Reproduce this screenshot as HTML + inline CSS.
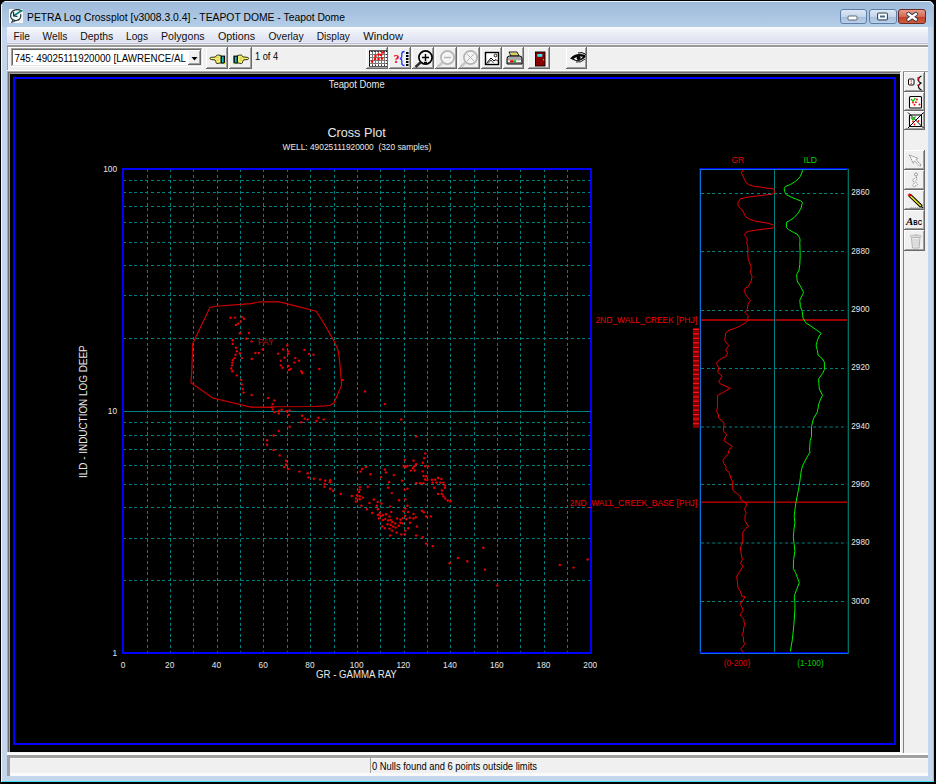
<!DOCTYPE html>
<html><head><meta charset="utf-8"><style>
html,body{margin:0;padding:0;background:#000;overflow:hidden}
svg{display:block}
text{font-family:"Liberation Sans", sans-serif}
</style></head><body>
<svg width="936" height="784" viewBox="0 0 936 784" font-family='"Liberation Sans", sans-serif'>
<rect x="0" y="0" width="936" height="784" fill="#000" />
<rect x="1" y="1" width="933" height="781" fill="#c3d6ec" />
<defs><linearGradient id="tg" x1="0" y1="0" x2="0" y2="1"><stop offset="0" stop-color="#9fbbdb"/><stop offset="1" stop-color="#b4cde8"/></linearGradient><linearGradient id="mg" x1="0" y1="0" x2="0" y2="1"><stop offset="0" stop-color="#fbfcfd"/><stop offset="0.35" stop-color="#eceff7"/><stop offset="1" stop-color="#dde1f0"/></linearGradient><linearGradient id="cg" x1="0" y1="0" x2="0" y2="1"><stop offset="0" stop-color="#e8a090"/><stop offset="0.5" stop-color="#d46a55"/><stop offset="0.55" stop-color="#c0412a"/><stop offset="1" stop-color="#d06040"/></linearGradient><linearGradient id="bg" x1="0" y1="0" x2="0" y2="1"><stop offset="0" stop-color="#dfe9f5"/><stop offset="0.5" stop-color="#c5d6ea"/><stop offset="0.55" stop-color="#a9c0dc"/><stop offset="1" stop-color="#bcd0e8"/></linearGradient></defs>
<rect x="2" y="2" width="931" height="25" fill="url(#tg)" />
<rect x="1" y="1" width="933" height="1" fill="#e8f0f8" />
<rect x="933" y="1" width="1" height="781" fill="#40e0f0" />
<rect x="1" y="781" width="933" height="1" fill="#40e0f0" />
<rect x="1" y="1" width="1" height="781" fill="#f0f6fc" />
<rect x="9" y="9" width="14" height="14" fill="#f4f6f8" />
<g fill="none" stroke-linecap="round"><path d="M21.5 11 C18 8.5 12 9.5 10.8 14 C9.8 18 12.5 21 16.5 20.5 C19.5 20 21 17.5 20.8 14.5" stroke="#1c3434" stroke-width="1.2"/><path d="M13 20 L11.5 22.5 L15 21" stroke="#1c3434" stroke-width="1"/><path d="M22 10.5 L14 15.5" stroke="#108080" stroke-width="1.6"/><path d="M13.5 12.5 L13.8 16 L17 16.3" stroke="#0c3a3a" stroke-width="1.3"/></g>
<text x="27.0" y="20.6" font-size="10.8" fill="#000" text-anchor="start" textLength="318.0" lengthAdjust="spacingAndGlyphs" >PETRA Log Crossplot [v3008.3.0.4] - TEAPOT DOME - Teapot Dome</text>
<rect x="840.5" y="9.5" width="26" height="14" rx="2.5" fill="url(#bg)" stroke="#5c7ea8" stroke-width="1"/>
<rect x="869.5" y="9.5" width="27" height="14" rx="2.5" fill="url(#bg)" stroke="#5c7ea8" stroke-width="1"/>
<rect x="898.5" y="9.5" width="27" height="14" rx="2.5" fill="url(#cg)" stroke="#6a2a20" stroke-width="1"/>
<rect x="848" y="16" width="9" height="4" rx="1" fill="#fff" stroke="#3a4a5a" stroke-width="0.8"/>
<rect x="877.5" y="13" width="10" height="7" rx="1" fill="none" stroke="#3a4a5a" stroke-width="1"/><rect x="879" y="14.5" width="7" height="4" fill="#fff" stroke="#fff" stroke-width="1"/><rect x="880" y="15.5" width="5" height="2" fill="#4a6a8a"/>
<path d="M908.4 13.9 L915.9 19.5 M915.9 13.9 L908.4 19.5" stroke="#2e3440" stroke-width="4.2" stroke-linecap="round"/><path d="M908.4 13.9 L915.9 19.5 M915.9 13.9 L908.4 19.5" stroke="#fff" stroke-width="2.5" stroke-linecap="round"/>
<path d="M1 1 H5 Q2 2 1 5 Z" fill="#000"/><path d="M934 1 H930 Q933 2 934 5 Z" fill="#000"/><path d="M929.5 1.6 Q932.8 2.4 933.4 6" fill="none" stroke="#e8f4fc" stroke-width="0.8"/>
<rect x="7" y="27" width="921" height="16" fill="url(#mg)" />
<rect x="7" y="42" width="921" height="1" fill="#e8ebf8" />
<rect x="7" y="43" width="921" height="1" fill="#b8bcd0" />
<text x="13.5" y="39.6" font-size="11.8" fill="#101010" text-anchor="start" textLength="16.3" lengthAdjust="spacingAndGlyphs" >File</text>
<text x="42.6" y="39.6" font-size="11.8" fill="#101010" text-anchor="start" textLength="24.7" lengthAdjust="spacingAndGlyphs" >Wells</text>
<text x="80.3" y="39.6" font-size="11.8" fill="#101010" text-anchor="start" textLength="33.0" lengthAdjust="spacingAndGlyphs" >Depths</text>
<text x="126.0" y="39.6" font-size="11.8" fill="#101010" text-anchor="start" textLength="22.0" lengthAdjust="spacingAndGlyphs" >Logs</text>
<text x="161.0" y="39.6" font-size="11.8" fill="#101010" text-anchor="start" textLength="43.6" lengthAdjust="spacingAndGlyphs" >Polygons</text>
<text x="218.0" y="39.6" font-size="11.8" fill="#101010" text-anchor="start" textLength="37.0" lengthAdjust="spacingAndGlyphs" >Options</text>
<text x="268.4" y="39.6" font-size="11.8" fill="#101010" text-anchor="start" textLength="35.3" lengthAdjust="spacingAndGlyphs" >Overlay</text>
<text x="316.7" y="39.6" font-size="11.8" fill="#101010" text-anchor="start" textLength="33.2" lengthAdjust="spacingAndGlyphs" >Display</text>
<text x="363.3" y="39.6" font-size="11.8" fill="#101010" text-anchor="start" textLength="39.7" lengthAdjust="spacingAndGlyphs" >Window</text>
<rect x="7" y="44" width="921" height="710" fill="#f0f0f0" />
<rect x="7" y="45" width="921" height="2" fill="#999999" />
<rect x="7" y="47" width="921" height="1" fill="#ffffff" />
<rect x="7" y="47" width="1" height="23" fill="#a0a0a0" />
<rect x="7" y="70" width="921" height="1" fill="#ffffff" />
<rect x="11" y="48" width="192" height="19" fill="#fff" />
<rect x="11" y="48" width="191" height="1" fill="#a0a0a0" />
<rect x="11" y="48" width="1" height="18" fill="#a0a0a0" />
<rect x="12" y="49" width="189" height="1" fill="#696969" />
<rect x="12" y="49" width="1" height="16" fill="#696969" />
<rect x="11" y="66" width="192" height="1" fill="#fff" />
<rect x="202" y="48" width="1" height="19" fill="#fff" />
<rect x="12" y="65" width="190" height="1" fill="#e3e3e3" />
<rect x="201" y="49" width="1" height="17" fill="#e3e3e3" />
<svg x="13" y="50" width="173" height="15">
<text x="1.5" y="11.7" font-size="11" fill="#000" text-anchor="start" textLength="176.8" lengthAdjust="spacingAndGlyphs" >745: 49025111920000 [LAWRENCE/ALL</text>
</svg>
<rect x="188" y="50" width="13" height="15" fill="#f0f0f0" />
<rect x="188" y="50" width="13" height="1" fill="#fff" />
<rect x="188" y="50" width="1" height="15" fill="#fff" />
<rect x="188" y="64" width="13" height="1" fill="#696969" />
<rect x="200" y="50" width="1" height="15" fill="#696969" />
<rect x="189" y="63" width="11" height="1" fill="#a0a0a0" />
<rect x="199" y="51" width="1" height="13" fill="#a0a0a0" />
<path d="M191.5 57 L197.5 57 L194.5 60.5 Z" fill="#000"/>
<rect x="206" y="47" width="22" height="22" fill="#f0f0f0" />
<rect x="206" y="47" width="22" height="1" fill="#fff" />
<rect x="206" y="47" width="1" height="22" fill="#fff" />
<rect x="206" y="68" width="22" height="1" fill="#696969" />
<rect x="227" y="47" width="1" height="22" fill="#696969" />
<rect x="207" y="67" width="20" height="1" fill="#a0a0a0" />
<rect x="226" y="48" width="1" height="20" fill="#a0a0a0" />
<rect x="229" y="47" width="23" height="22" fill="#f0f0f0" />
<rect x="229" y="47" width="23" height="1" fill="#fff" />
<rect x="229" y="47" width="1" height="22" fill="#fff" />
<rect x="229" y="68" width="23" height="1" fill="#696969" />
<rect x="251" y="47" width="1" height="22" fill="#696969" />
<rect x="230" y="67" width="21" height="1" fill="#a0a0a0" />
<rect x="250" y="48" width="1" height="20" fill="#a0a0a0" />
<g transform="translate(210,58.5)"><path d="M0 0 Q-0.3 -0.9 1.3 -1.2 L5.5 -1.5 L6.3 -2.8 Q7.1 -3.8 8.8 -3.4 L10.9 -3 L11.2 4.3 L7 5.1 Q5.8 4.7 5.8 3.1 L5 1.4 L1.3 1.1 Q0.1 1 0 0 Z" fill="#f4f070" stroke="#202000" stroke-width="0.9"/><path d="M6.6 -0.6 L8.8 -0.7 M6.6 1.6 L8.8 1.5" stroke="#a0a040" stroke-width="0.6"/><rect x="10.8" y="-2.9" width="4.3" height="8" fill="#000"/><rect x="11.8" y="-1.9" width="1.9" height="6" fill="#10b8c8"/><rect x="14" y="4.4" width="1.4" height="1.4" fill="#e0e000"/></g>
<g transform="translate(248.5,58.5) scale(-1,1)"><path d="M0 0 Q-0.3 -0.9 1.3 -1.2 L5.5 -1.5 L6.3 -2.8 Q7.1 -3.8 8.8 -3.4 L10.9 -3 L11.2 4.3 L7 5.1 Q5.8 4.7 5.8 3.1 L5 1.4 L1.3 1.1 Q0.1 1 0 0 Z" fill="#f4f070" stroke="#202000" stroke-width="0.9"/><path d="M6.6 -0.6 L8.8 -0.7 M6.6 1.6 L8.8 1.5" stroke="#a0a040" stroke-width="0.6"/><rect x="10.8" y="-2.9" width="4.3" height="8" fill="#000"/><rect x="11.8" y="-1.9" width="1.9" height="6" fill="#10b8c8"/><rect x="14" y="4.4" width="1.4" height="1.4" fill="#e0e000"/></g>
<text x="255.0" y="59.5" font-size="10.5" fill="#000" text-anchor="start" textLength="23.0" lengthAdjust="spacingAndGlyphs" >1 of 4</text>
<rect x="366" y="47" width="22" height="22" fill="#f0f0f0" />
<rect x="366" y="47" width="22" height="1" fill="#fff" />
<rect x="366" y="47" width="1" height="22" fill="#fff" />
<rect x="366" y="68" width="22" height="1" fill="#696969" />
<rect x="387" y="47" width="1" height="22" fill="#696969" />
<rect x="367" y="67" width="20" height="1" fill="#a0a0a0" />
<rect x="386" y="48" width="1" height="20" fill="#a0a0a0" />
<rect x="389" y="47" width="22" height="22" fill="#f0f0f0" />
<rect x="389" y="47" width="22" height="1" fill="#fff" />
<rect x="389" y="47" width="1" height="22" fill="#fff" />
<rect x="389" y="68" width="22" height="1" fill="#696969" />
<rect x="410" y="47" width="1" height="22" fill="#696969" />
<rect x="390" y="67" width="20" height="1" fill="#a0a0a0" />
<rect x="409" y="48" width="1" height="20" fill="#a0a0a0" />
<rect x="412" y="47" width="22" height="22" fill="#f0f0f0" />
<rect x="412" y="47" width="22" height="1" fill="#fff" />
<rect x="412" y="47" width="1" height="22" fill="#fff" />
<rect x="412" y="68" width="22" height="1" fill="#696969" />
<rect x="433" y="47" width="1" height="22" fill="#696969" />
<rect x="413" y="67" width="20" height="1" fill="#a0a0a0" />
<rect x="432" y="48" width="1" height="20" fill="#a0a0a0" />
<rect x="435" y="47" width="22" height="22" fill="#f0f0f0" />
<rect x="435" y="47" width="22" height="1" fill="#fff" />
<rect x="435" y="47" width="1" height="22" fill="#fff" />
<rect x="435" y="68" width="22" height="1" fill="#696969" />
<rect x="456" y="47" width="1" height="22" fill="#696969" />
<rect x="436" y="67" width="20" height="1" fill="#a0a0a0" />
<rect x="455" y="48" width="1" height="20" fill="#a0a0a0" />
<rect x="458" y="47" width="22" height="22" fill="#f0f0f0" />
<rect x="458" y="47" width="22" height="1" fill="#fff" />
<rect x="458" y="47" width="1" height="22" fill="#fff" />
<rect x="458" y="68" width="22" height="1" fill="#696969" />
<rect x="479" y="47" width="1" height="22" fill="#696969" />
<rect x="459" y="67" width="20" height="1" fill="#a0a0a0" />
<rect x="478" y="48" width="1" height="20" fill="#a0a0a0" />
<rect x="481" y="47" width="21" height="22" fill="#f0f0f0" />
<rect x="481" y="47" width="21" height="1" fill="#fff" />
<rect x="481" y="47" width="1" height="22" fill="#fff" />
<rect x="481" y="68" width="21" height="1" fill="#696969" />
<rect x="501" y="47" width="1" height="22" fill="#696969" />
<rect x="482" y="67" width="19" height="1" fill="#a0a0a0" />
<rect x="500" y="48" width="1" height="20" fill="#a0a0a0" />
<rect x="503" y="47" width="21" height="22" fill="#f0f0f0" />
<rect x="503" y="47" width="21" height="1" fill="#fff" />
<rect x="503" y="47" width="1" height="22" fill="#fff" />
<rect x="503" y="68" width="21" height="1" fill="#696969" />
<rect x="523" y="47" width="1" height="22" fill="#696969" />
<rect x="504" y="67" width="19" height="1" fill="#a0a0a0" />
<rect x="522" y="48" width="1" height="20" fill="#a0a0a0" />
<rect x="528" y="47" width="22" height="22" fill="#f0f0f0" />
<rect x="528" y="47" width="22" height="1" fill="#fff" />
<rect x="528" y="47" width="1" height="22" fill="#fff" />
<rect x="528" y="68" width="22" height="1" fill="#696969" />
<rect x="549" y="47" width="1" height="22" fill="#696969" />
<rect x="529" y="67" width="20" height="1" fill="#a0a0a0" />
<rect x="548" y="48" width="1" height="20" fill="#a0a0a0" />
<rect x="566" y="47" width="21" height="22" fill="#f0f0f0" />
<rect x="566" y="47" width="21" height="1" fill="#fff" />
<rect x="566" y="47" width="1" height="22" fill="#fff" />
<rect x="566" y="68" width="21" height="1" fill="#696969" />
<rect x="586" y="47" width="1" height="22" fill="#696969" />
<rect x="567" y="67" width="19" height="1" fill="#a0a0a0" />
<rect x="585" y="48" width="1" height="20" fill="#a0a0a0" />
<rect x="369" y="50.5" width="18" height="16" fill="#787878"/><rect x="369.5" y="51" width="17" height="15" fill="none" stroke="#000" stroke-width="1"/>
<rect x="370" y="52" width="2" height="2" fill="#fff"/><rect x="370" y="55" width="2" height="2" fill="#fff"/><rect x="370" y="58" width="2" height="2" fill="#fff"/><rect x="370" y="61" width="2" height="2" fill="#fff"/><rect x="370" y="64" width="2" height="2" fill="#fff"/><rect x="373" y="52" width="2" height="2" fill="#fff"/><rect x="373" y="55" width="2" height="2" fill="#fff"/><rect x="373" y="58" width="2" height="2" fill="#fff"/><rect x="373" y="61" width="2" height="2" fill="#fff"/><rect x="373" y="64" width="2" height="2" fill="#fff"/><rect x="376" y="52" width="2" height="2" fill="#fff"/><rect x="376" y="55" width="2" height="2" fill="#fff"/><rect x="376" y="58" width="2" height="2" fill="#fff"/><rect x="376" y="61" width="2" height="2" fill="#fff"/><rect x="376" y="64" width="2" height="2" fill="#fff"/><rect x="379" y="52" width="2" height="2" fill="#fff"/><rect x="379" y="55" width="2" height="2" fill="#fff"/><rect x="379" y="58" width="2" height="2" fill="#fff"/><rect x="379" y="61" width="2" height="2" fill="#fff"/><rect x="379" y="64" width="2" height="2" fill="#fff"/><rect x="382" y="52" width="2" height="2" fill="#fff"/><rect x="382" y="55" width="2" height="2" fill="#fff"/><rect x="382" y="58" width="2" height="2" fill="#fff"/><rect x="382" y="61" width="2" height="2" fill="#fff"/><rect x="382" y="64" width="2" height="2" fill="#fff"/><rect x="385" y="52" width="2" height="2" fill="#fff"/><rect x="385" y="55" width="2" height="2" fill="#fff"/><rect x="385" y="58" width="2" height="2" fill="#fff"/><rect x="385" y="61" width="2" height="2" fill="#fff"/><rect x="385" y="64" width="2" height="2" fill="#fff"/>
<rect x="370" y="51.5" width="16" height="14" fill="none" stroke="#fff" stroke-width="0.6" stroke-dasharray="1 2"/>
<circle cx="372" cy="61.5" r="1.3" fill="#f00"/>
<circle cx="375" cy="59" r="1.3" fill="#f00"/>
<circle cx="378.5" cy="59" r="1.3" fill="#f00"/>
<circle cx="382" cy="58.5" r="1.3" fill="#f00"/>
<circle cx="375.5" cy="56" r="1.3" fill="#f00"/>
<circle cx="378.5" cy="54.5" r="1.3" fill="#f00"/>
<circle cx="381" cy="55" r="1.3" fill="#f00"/>
<circle cx="383" cy="52.5" r="1.3" fill="#f00"/>
<text x="393.5" y="63" font-size="12" style="font-family:'Liberation Serif',serif;font-weight:bold" fill="#f00000">?</text>
<path d="M404.5 51.5 Q401.8 51.5 401.8 54 L401.8 56.5 Q401.8 58.2 399.8 58.5 Q401.8 58.8 401.8 60.5 L401.8 63 Q401.8 65.5 404.5 65.5" fill="none" stroke="#1a3cff" stroke-width="1.3"/>
<rect x="406" y="52" width="2.5" height="2" fill="#000" />
<rect x="406" y="55" width="2.5" height="2" fill="#000" />
<rect x="406" y="58" width="2.5" height="2" fill="#000" />
<rect x="406" y="61" width="2.5" height="2" fill="#000" />
<rect x="406" y="64" width="2.5" height="2" fill="#000" />
<path d="M420.5 62.5 L415.5 67.0" stroke="#303030" stroke-width="2.6"/>
<circle cx="425.5" cy="57.5" r="6.6" fill="#f4f4f4" stroke="#000" stroke-width="1.7"/>
<path d="M422.0 57.5 H429.0 M425.5 54.0 V61.0 M424.0 62.5 H427.0" stroke="#000" stroke-width="1.4"/>
<path d="M442.5 62.5 L437.5 67.0" stroke="#c8c8c8" stroke-width="2.6"/>
<circle cx="447.5" cy="57.5" r="6.6" fill="#f4f4f4" stroke="#b4b4b4" stroke-width="1.7"/>
<path d="M444.0 57.5 H451.0" stroke="#b4b4b4" stroke-width="1.4"/>
<path d="M465.5 62.5 L460.5 67.0" stroke="#c8c8c8" stroke-width="2.6"/>
<circle cx="470.5" cy="57.5" r="6.6" fill="#f4f4f4" stroke="#b4b4b4" stroke-width="1.7"/>
<path d="M467.0 54.0 L474.0 61.0 M474.0 54.0 L467.0 61.0" stroke="#b4b4b4" stroke-width="1"/>
<rect x="485.5" y="52.5" width="13" height="12" fill="#fff" stroke="#000" stroke-width="1.4"/><path d="M486.5 63.5 L491 58 L494 61 L496 59.5 L498 61.5" fill="none" stroke="#000" stroke-width="1"/><path d="M488 63.5 L491 60 L493.5 63" fill="none" stroke="#000" stroke-width="0.7"/><circle cx="495.5" cy="55.5" r="1.4" fill="none" stroke="#000" stroke-width="0.9"/>
<path d="M509 52 L517 52 L519 56 L511 56 Z" fill="#f8f8c0" stroke="#000" stroke-width="0.9"/><path d="M510.5 53.3 H516.5 M511.2 54.7 H517.3" stroke="#c0b000" stroke-width="0.7"/><path d="M507 58.5 Q507 56 509.5 56 L519.5 56 Q522 56 522 58.5 L522 64 L507 64 Z" fill="#a8a8a8" stroke="#000" stroke-width="1"/><rect x="508" y="60.5" width="13" height="1.6" fill="#fff"/><rect x="510" y="60.3" width="3" height="2" fill="#e00"/><rect x="513" y="60.3" width="3" height="2" fill="#0c0"/><rect x="508" y="62.5" width="13" height="1" fill="#505050"/>
<rect x="535.5" y="52" width="9.5" height="14" fill="#8a0000" stroke="#000" stroke-width="0.9"/><rect x="537.3" y="54" width="5" height="2.8" fill="#30e8f8"/><rect x="543" y="59" width="1.2" height="1.4" fill="#f0a020"/>
<path d="M570 58.5 Q576 52 585 55 L585.5 57 Q580 62.5 574.5 60.5 Z" fill="#000"/><path d="M573.5 58.8 Q578 55.5 583 56.8 Q580 60.8 576 60" fill="#fff"/><circle cx="578.6" cy="58" r="2.1" fill="#000"/><path d="M578 53 Q582 51.5 586 54.5" fill="none" stroke="#000" stroke-width="1"/><path d="M576 62 Q581 63 585 59" fill="none" stroke="#000" stroke-width="0.9"/>
<rect x="903" y="71" width="1" height="683" fill="#808080" />
<rect x="903" y="71" width="25" height="1" fill="#a0a0a0" />
<rect x="904" y="72" width="21" height="20" fill="#f0f0f0" />
<rect x="904" y="72" width="21" height="1" fill="#fff" />
<rect x="904" y="72" width="1" height="20" fill="#fff" />
<rect x="904" y="91" width="21" height="1" fill="#696969" />
<rect x="924" y="72" width="1" height="20" fill="#696969" />
<rect x="905" y="90" width="19" height="1" fill="#a0a0a0" />
<rect x="923" y="73" width="1" height="18" fill="#a0a0a0" />
<rect x="904" y="92" width="21" height="19" fill="#f0f0f0" />
<rect x="904" y="92" width="21" height="1" fill="#fff" />
<rect x="904" y="92" width="1" height="19" fill="#fff" />
<rect x="904" y="110" width="21" height="1" fill="#696969" />
<rect x="924" y="92" width="1" height="19" fill="#696969" />
<rect x="905" y="109" width="19" height="1" fill="#a0a0a0" />
<rect x="923" y="93" width="1" height="17" fill="#a0a0a0" />
<rect x="904" y="111" width="21" height="19" fill="#f0f0f0" />
<rect x="904" y="111" width="21" height="1" fill="#fff" />
<rect x="904" y="111" width="1" height="19" fill="#fff" />
<rect x="904" y="129" width="21" height="1" fill="#696969" />
<rect x="924" y="111" width="1" height="19" fill="#696969" />
<rect x="905" y="128" width="19" height="1" fill="#a0a0a0" />
<rect x="923" y="112" width="1" height="17" fill="#a0a0a0" />
<rect x="904" y="150" width="21" height="20" fill="#f0f0f0" />
<rect x="904" y="150" width="21" height="1" fill="#fff" />
<rect x="904" y="150" width="1" height="20" fill="#fff" />
<rect x="904" y="169" width="21" height="1" fill="#696969" />
<rect x="924" y="150" width="1" height="20" fill="#696969" />
<rect x="905" y="168" width="19" height="1" fill="#a0a0a0" />
<rect x="923" y="151" width="1" height="18" fill="#a0a0a0" />
<rect x="904" y="170" width="21" height="20" fill="#f0f0f0" />
<rect x="904" y="170" width="21" height="1" fill="#fff" />
<rect x="904" y="170" width="1" height="20" fill="#fff" />
<rect x="904" y="189" width="21" height="1" fill="#696969" />
<rect x="924" y="170" width="1" height="20" fill="#696969" />
<rect x="905" y="188" width="19" height="1" fill="#a0a0a0" />
<rect x="923" y="171" width="1" height="18" fill="#a0a0a0" />
<rect x="904" y="190" width="21" height="20" fill="#f0f0f0" />
<rect x="904" y="190" width="21" height="1" fill="#fff" />
<rect x="904" y="190" width="1" height="20" fill="#fff" />
<rect x="904" y="209" width="21" height="1" fill="#696969" />
<rect x="924" y="190" width="1" height="20" fill="#696969" />
<rect x="905" y="208" width="19" height="1" fill="#a0a0a0" />
<rect x="923" y="191" width="1" height="18" fill="#a0a0a0" />
<rect x="904" y="210" width="21" height="20" fill="#f0f0f0" />
<rect x="904" y="210" width="21" height="1" fill="#fff" />
<rect x="904" y="210" width="1" height="20" fill="#fff" />
<rect x="904" y="229" width="21" height="1" fill="#696969" />
<rect x="924" y="210" width="1" height="20" fill="#696969" />
<rect x="905" y="228" width="19" height="1" fill="#a0a0a0" />
<rect x="923" y="211" width="1" height="18" fill="#a0a0a0" />
<rect x="904" y="230" width="21" height="21" fill="#f0f0f0" />
<rect x="904" y="230" width="21" height="1" fill="#fff" />
<rect x="904" y="230" width="1" height="21" fill="#fff" />
<rect x="904" y="250" width="21" height="1" fill="#696969" />
<rect x="924" y="230" width="1" height="21" fill="#696969" />
<rect x="905" y="249" width="19" height="1" fill="#a0a0a0" />
<rect x="923" y="231" width="1" height="19" fill="#a0a0a0" />
<rect x="908.5" y="79" width="5.5" height="6" rx="1" fill="#fff" stroke="#000" stroke-width="1"/><circle cx="911.2" cy="81" r="0.7" fill="#f00"/><circle cx="911.2" cy="83.2" r="0.7" fill="#f00"/>
<path d="M921.5 76 Q918.5 77 918.5 80 Q918.5 82.5 921.5 83 M921.5 83 Q918.5 84 918.5 86.5 Q918.5 89 921.5 90" fill="none" stroke="#000" stroke-width="1.1"/><circle cx="918" cy="77.8" r="0.9" fill="#f00"/><circle cx="918" cy="79.8" r="0.9" fill="#f00"/><circle cx="918" cy="85.3" r="0.9" fill="#f00"/>
<rect x="909.5" y="96.5" width="12" height="11.5" rx="1" fill="#fff" stroke="#000" stroke-width="1.1"/><path d="M911 99 L913 101.3 L915.5 98" fill="none" stroke="#0c0" stroke-width="1.3"/>
<circle cx="917" cy="99.5" r="0.95" fill="#f00"/>
<circle cx="913" cy="102.5" r="0.95" fill="#f00"/>
<circle cx="916" cy="102.3" r="0.95" fill="#f00"/>
<circle cx="919.5" cy="104.5" r="0.95" fill="#f00"/>
<circle cx="914.5" cy="104.8" r="0.95" fill="#f00"/>
<rect x="909.5" y="115" width="12" height="11.5" rx="1" fill="#fff" stroke="#000" stroke-width="1.1"/><path d="M908 112.5 L923.5 128 M923.5 112.5 L908 128" stroke="#000" stroke-width="1"/><path d="M911 117.5 L913 119.8 L915.5 116.5" fill="none" stroke="#0c0" stroke-width="1.3"/><circle cx="913" cy="121.5" r="0.9" fill="#f00"/><circle cx="918.5" cy="121" r="0.9" fill="#f00"/><circle cx="914.5" cy="124.5" r="0.9" fill="#f00"/>
<path d="M909.3 155 L913.2 163.3 L914.6 160.8 L919.8 166.5 L921.2 165.2 L916 159.6 L918 158.3 Z" fill="#fafafa" stroke="#808080" stroke-width="0.9" stroke-dasharray="1.6 0.6"/>
<circle cx="916" cy="174.5" r="1.5" fill="#fafafa" stroke="#8a8a8a" stroke-width="0.9"/><path d="M912.5 180 L916.5 177 L917 179 L915.2 181.2 L917.5 184.5 L914 187 L912.5 185.2 L914.5 183 Z" fill="#fafafa" stroke="#8a8a8a" stroke-width="0.9" stroke-dasharray="1.6 0.6"/>
<path d="M909.5 195 L921.5 206.5" stroke="#000" stroke-width="3.6"/><path d="M909.8 195.3 L921 206" stroke="#f0e020" stroke-width="1.6"/><path d="M908.6 194.2 L910.6 196.2" stroke="#e00000" stroke-width="2.6"/><path d="M921 206.5 L923 207.8" stroke="#000" stroke-width="1.3"/><path d="M910.5 208 L920 208" stroke="#606060" stroke-width="0.9" stroke-dasharray="1.2 1"/>
<text x="906" y="224.5" style="font-family:'Liberation Serif',serif;font-weight:bold;font-style:italic" font-size="11" fill="#000">A</text><text x="913.3" y="224.5" style="font-family:'Liberation Sans',sans-serif;font-weight:bold" font-size="8" fill="#000" textLength="8.7" lengthAdjust="spacingAndGlyphs">BC</text>
<path d="M911.5 237.5 L920 237.5 L919 248 L912.5 248 Z" fill="#ececec" stroke="#b0b0b0" stroke-width="1"/><path d="M914 239 V246.5 M916 239 V246.5 M918 239 V246.5" stroke="#c4c4c4" stroke-width="0.8"/><rect x="910.5" y="235.3" width="10.5" height="2" rx="0.8" fill="#e4e4e4" stroke="#b0b0b0" stroke-width="0.8"/><path d="M914.5 235 Q915.8 233.5 917 235" fill="none" stroke="#b0b0b0" stroke-width="0.8"/>
<rect x="7" y="71" width="894" height="1" fill="#a8a8a8" />
<rect x="7" y="71" width="1" height="682" fill="#a8a8a8" />
<rect x="8" y="72" width="892" height="1" fill="#707070" />
<rect x="8" y="72" width="1" height="681" fill="#707070" />
<rect x="9" y="73" width="891" height="1" fill="#a0a0a0" />
<rect x="9" y="73" width="1" height="679" fill="#a0a0a0" />
<rect x="10" y="74" width="890" height="678" fill="#000" />
<rect x="7" y="752" width="896" height="1" fill="#f2f2f2" />
<rect x="900" y="72" width="1" height="681" fill="#fff" />
<rect x="7" y="753" width="921" height="2" fill="#ffffff" />
<rect x="7" y="755" width="921" height="3" fill="#a0a0a0" />
<rect x="7" y="758" width="921" height="15" fill="#f0f0f0" />
<rect x="10" y="758" width="917" height="1" fill="#fafafa" />
<rect x="7" y="773" width="921" height="3" fill="#fafafa" />
<rect x="7" y="755" width="3" height="21" fill="#a0a0a0" />
<rect x="370" y="758" width="1" height="15" fill="#a0a0a0" />
<text x="372.0" y="769.6" font-size="11" fill="#000" text-anchor="start" textLength="165.0" lengthAdjust="spacingAndGlyphs" >0 Nulls found and 6 points outside limits</text>
<rect x="14" y="78" width="881" height="666" fill="none" stroke="#0000ff" stroke-width="2"/>
<text x="328.7" y="88.2" font-size="11" fill="#e8e8e8" text-anchor="start" textLength="56.0" lengthAdjust="spacingAndGlyphs" >Teapot Dome</text>
<text x="327.4" y="137.0" font-size="12.5" fill="#e8e8e8" text-anchor="start" textLength="58.4" lengthAdjust="spacingAndGlyphs" >Cross Plot</text>
<text x="282.6" y="149.7" font-size="9" fill="#e8e8e8" text-anchor="start" textLength="148.7" lengthAdjust="spacingAndGlyphs" xml:space="preserve">WELL: 49025111920000  (320 samples)</text>
<path d="M147.5 169 V653 M170.5 169 V653 M193.5 169 V653 M217.5 169 V653 M240.5 169 V653 M263.5 169 V653 M287.5 169 V653 M310.5 169 V653 M334.5 169 V653 M357.5 169 V653 M380.5 169 V653 M404.5 169 V653 M427.5 169 V653 M450.5 169 V653 M474.5 169 V653 M497.5 169 V653 M520.5 169 V653 M544.5 169 V653 M567.5 169 V653 M123 580.5 H591 M123 538.5 H591 M123 507.5 H591 M123 484.5 H591 M123 465.5 H591 M123 449.5 H591 M123 435.5 H591 M123 422.5 H591 M123 338.5 H591 M123 295.5 H591 M123 265.5 H591 M123 242.5 H591 M123 222.5 H591 M123 206.5 H591 M123 192.5 H591 M123 180.5 H591" stroke="#008080" stroke-width="1" stroke-dasharray="3 2.6" fill="none" shape-rendering="crispEdges"/>
<path d="M123 411.5 H591" stroke="#008080" stroke-width="1"/>
<rect x="123.0" y="169.0" width="468" height="484" fill="none" stroke="#0000ff" stroke-width="2"/>
<text x="117.0" y="172.3" font-size="9" fill="#e8e8e8" text-anchor="end" textLength="13.8" lengthAdjust="spacingAndGlyphs" >100</text>
<text x="117.0" y="414.3" font-size="9" fill="#e8e8e8" text-anchor="end" textLength="9.2" lengthAdjust="spacingAndGlyphs" >10</text>
<text x="117.0" y="656.3" font-size="9" fill="#e8e8e8" text-anchor="end" textLength="4.6" lengthAdjust="spacingAndGlyphs" >1</text>
<text x="123.0" y="667.6" font-size="9" fill="#e8e8e8" text-anchor="middle" textLength="4.6" lengthAdjust="spacingAndGlyphs" >0</text>
<text x="169.7" y="667.6" font-size="9" fill="#e8e8e8" text-anchor="middle" textLength="9.2" lengthAdjust="spacingAndGlyphs" >20</text>
<text x="216.4" y="667.6" font-size="9" fill="#e8e8e8" text-anchor="middle" textLength="9.2" lengthAdjust="spacingAndGlyphs" >40</text>
<text x="263.2" y="667.6" font-size="9" fill="#e8e8e8" text-anchor="middle" textLength="9.2" lengthAdjust="spacingAndGlyphs" >60</text>
<text x="309.9" y="667.6" font-size="9" fill="#e8e8e8" text-anchor="middle" textLength="9.2" lengthAdjust="spacingAndGlyphs" >80</text>
<text x="356.6" y="667.6" font-size="9" fill="#e8e8e8" text-anchor="middle" textLength="13.8" lengthAdjust="spacingAndGlyphs" >100</text>
<text x="403.3" y="667.6" font-size="9" fill="#e8e8e8" text-anchor="middle" textLength="13.8" lengthAdjust="spacingAndGlyphs" >120</text>
<text x="450.0" y="667.6" font-size="9" fill="#e8e8e8" text-anchor="middle" textLength="13.8" lengthAdjust="spacingAndGlyphs" >140</text>
<text x="496.8" y="667.6" font-size="9" fill="#e8e8e8" text-anchor="middle" textLength="13.8" lengthAdjust="spacingAndGlyphs" >160</text>
<text x="543.5" y="667.6" font-size="9" fill="#e8e8e8" text-anchor="middle" textLength="13.8" lengthAdjust="spacingAndGlyphs" >180</text>
<text x="590.2" y="667.6" font-size="9" fill="#e8e8e8" text-anchor="middle" textLength="13.8" lengthAdjust="spacingAndGlyphs" >200</text>
<text x="316.0" y="677.6" font-size="10" fill="#e8e8e8" text-anchor="start" textLength="80.8" lengthAdjust="spacingAndGlyphs" >GR - GAMMA RAY</text>
<text transform="translate(87.3,478) rotate(-90)" x="0" y="0" font-size="11" fill="#e8e8e8" textLength="132.7" lengthAdjust="spacingAndGlyphs">ILD - INDUCTION LOG DEEP</text>
<polygon points="210.0,307.3 216.3,306.3 250.8,303.6 259.9,301.8 279.0,301.8 284.4,303.1 316.2,311.2 323.5,322.7 334.4,341.8 338.0,349.9 339.8,362.6 341.6,384.4 341.5,385.4 333.8,403.3 330.0,405.3 325.3,405.9 312.5,406.5 275.6,406.7 270.8,407.3 250.8,407.1 212.7,398.0 190.9,382.6 191.8,371.7 192.7,343.6" fill="none" stroke="#d00000" stroke-width="1.15"/>
<text x="258.0" y="345.0" font-size="9" fill="#b01010" text-anchor="start" textLength="16.0" lengthAdjust="spacingAndGlyphs" >PAY</text>
<g fill="#e80000"><circle cx="230.5" cy="317.8" r="1.2"/><circle cx="234.9" cy="317.6" r="1.2"/><circle cx="241.8" cy="316.9" r="1.2"/><circle cx="243.9" cy="318.7" r="1.2"/><circle cx="240.8" cy="321.4" r="1.2"/><circle cx="238.1" cy="323.6" r="1.2"/><circle cx="235.9" cy="324.9" r="1.2"/><circle cx="239.9" cy="333.2" r="1.2"/><circle cx="249.0" cy="333.0" r="1.2"/><circle cx="246.3" cy="338.7" r="1.2"/><circle cx="251.7" cy="341.4" r="1.2"/><circle cx="232.7" cy="340.3" r="1.2"/><circle cx="232.7" cy="343.9" r="1.2"/><circle cx="235.9" cy="347.8" r="1.2"/><circle cx="236.8" cy="351.2" r="1.2"/><circle cx="239.9" cy="353.2" r="1.2"/><circle cx="235.4" cy="354.8" r="1.2"/><circle cx="234.5" cy="358.1" r="1.2"/><circle cx="232.7" cy="359.9" r="1.2"/><circle cx="232.3" cy="362.6" r="1.2"/><circle cx="232.1" cy="365.4" r="1.2"/><circle cx="231.2" cy="368.5" r="1.2"/><circle cx="232.3" cy="371.2" r="1.2"/><circle cx="241.8" cy="358.1" r="1.2"/><circle cx="251.7" cy="359.0" r="1.2"/><circle cx="255.4" cy="353.0" r="1.2"/><circle cx="259.0" cy="353.0" r="1.2"/><circle cx="262.6" cy="349.4" r="1.2"/><circle cx="287.2" cy="345.4" r="1.2"/><circle cx="283.2" cy="349.4" r="1.2"/><circle cx="288.1" cy="351.4" r="1.2"/><circle cx="278.1" cy="353.6" r="1.2"/><circle cx="288.1" cy="353.6" r="1.2"/><circle cx="284.4" cy="357.6" r="1.2"/><circle cx="280.8" cy="360.8" r="1.2"/><circle cx="280.8" cy="365.4" r="1.2"/><circle cx="282.6" cy="367.7" r="1.2"/><circle cx="288.6" cy="365.9" r="1.2"/><circle cx="289.0" cy="369.9" r="1.2"/><circle cx="290.8" cy="369.0" r="1.2"/><circle cx="294.4" cy="362.6" r="1.2"/><circle cx="295.3" cy="358.1" r="1.2"/><circle cx="299.0" cy="360.8" r="1.2"/><circle cx="304.4" cy="349.9" r="1.2"/><circle cx="309.0" cy="353.9" r="1.2"/><circle cx="313.5" cy="354.8" r="1.2"/><circle cx="301.3" cy="371.2" r="1.2"/><circle cx="302.2" cy="373.0" r="1.2"/><circle cx="319.3" cy="369.0" r="1.2"/><circle cx="342.6" cy="379.9" r="1.2"/><circle cx="236.7" cy="375.4" r="1.2"/><circle cx="241.2" cy="379.9" r="1.2"/><circle cx="241.8" cy="384.4" r="1.2"/><circle cx="242.7" cy="389.0" r="1.2"/><circle cx="243.6" cy="392.6" r="1.2"/><circle cx="251.7" cy="395.0" r="1.2"/><circle cx="268.1" cy="398.1" r="1.2"/><circle cx="274.4" cy="400.4" r="1.2"/><circle cx="272.6" cy="404.1" r="1.2"/><circle cx="271.7" cy="407.1" r="1.2"/><circle cx="272.8" cy="409.4" r="1.2"/><circle cx="274.4" cy="412.1" r="1.2"/><circle cx="278.8" cy="411.0" r="1.2"/><circle cx="278.8" cy="413.4" r="1.2"/><circle cx="281.6" cy="409.7" r="1.2"/><circle cx="286.1" cy="411.3" r="1.2"/><circle cx="289.6" cy="410.5" r="1.2"/><circle cx="288.8" cy="415.0" r="1.2"/><circle cx="302.1" cy="415.8" r="1.2"/><circle cx="304.8" cy="418.6" r="1.2"/><circle cx="307.7" cy="419.5" r="1.2"/><circle cx="301.3" cy="422.2" r="1.2"/><circle cx="316.5" cy="421.0" r="1.2"/><circle cx="318.4" cy="417.8" r="1.2"/><circle cx="323.7" cy="419.4" r="1.2"/><circle cx="289.7" cy="426.7" r="1.2"/><circle cx="278.8" cy="431.1" r="1.2"/><circle cx="273.6" cy="435.5" r="1.2"/><circle cx="267.1" cy="440.2" r="1.2"/><circle cx="267.1" cy="444.7" r="1.2"/><circle cx="273.6" cy="450.0" r="1.2"/><circle cx="279.6" cy="455.4" r="1.2"/><circle cx="286.1" cy="460.7" r="1.2"/><circle cx="286.1" cy="464.4" r="1.2"/><circle cx="284.1" cy="467.1" r="1.2"/><circle cx="288.0" cy="469.0" r="1.2"/><circle cx="299.4" cy="471.6" r="1.2"/><circle cx="307.7" cy="473.2" r="1.2"/><circle cx="308.5" cy="477.5" r="1.2"/><circle cx="313.8" cy="478.7" r="1.2"/><circle cx="320.0" cy="479.5" r="1.2"/><circle cx="325.3" cy="480.7" r="1.2"/><circle cx="330.1" cy="480.3" r="1.2"/><circle cx="329.8" cy="482.3" r="1.2"/><circle cx="324.5" cy="483.9" r="1.2"/><circle cx="324.5" cy="486.8" r="1.2"/><circle cx="330.1" cy="488.8" r="1.2"/><circle cx="333.0" cy="490.8" r="1.2"/><circle cx="340.9" cy="494.0" r="1.2"/><circle cx="351.8" cy="496.0" r="1.2"/><circle cx="357.1" cy="495.2" r="1.2"/><circle cx="356.1" cy="498.4" r="1.2"/><circle cx="359.8" cy="496.3" r="1.2"/><circle cx="363.0" cy="497.6" r="1.2"/><circle cx="359.8" cy="499.2" r="1.2"/><circle cx="355.8" cy="501.6" r="1.2"/><circle cx="359.8" cy="487.1" r="1.2"/><circle cx="359.8" cy="489.6" r="1.2"/><circle cx="359.0" cy="492.0" r="1.2"/><circle cx="360.6" cy="471.6" r="1.2"/><circle cx="362.2" cy="469.0" r="1.2"/><circle cx="365.9" cy="467.1" r="1.2"/><circle cx="370.5" cy="474.3" r="1.2"/><circle cx="367.8" cy="486.7" r="1.2"/><circle cx="373.7" cy="499.5" r="1.2"/><circle cx="369.4" cy="502.9" r="1.2"/><circle cx="377.7" cy="501.9" r="1.2"/><circle cx="381.4" cy="503.5" r="1.2"/><circle cx="381.1" cy="477.1" r="1.2"/><circle cx="384.9" cy="469.5" r="1.2"/><circle cx="385.9" cy="472.4" r="1.2"/><circle cx="393.8" cy="475.1" r="1.2"/><circle cx="389.1" cy="482.3" r="1.2"/><circle cx="388.1" cy="487.6" r="1.2"/><circle cx="391.8" cy="493.1" r="1.2"/><circle cx="399.0" cy="500.3" r="1.2"/><circle cx="384.9" cy="404.1" r="1.2"/><circle cx="425.3" cy="453.5" r="1.2"/><circle cx="424.2" cy="458.1" r="1.2"/><circle cx="422.7" cy="462.7" r="1.2"/><circle cx="404.8" cy="459.9" r="1.2"/><circle cx="413.5" cy="460.7" r="1.2"/><circle cx="416.1" cy="464.2" r="1.2"/><circle cx="414.3" cy="466.3" r="1.2"/><circle cx="413.1" cy="468.3" r="1.2"/><circle cx="410.9" cy="470.6" r="1.2"/><circle cx="414.6" cy="470.6" r="1.2"/><circle cx="403.6" cy="466.0" r="1.2"/><circle cx="405.4" cy="467.2" r="1.2"/><circle cx="407.4" cy="466.0" r="1.2"/><circle cx="425.0" cy="466.3" r="1.2"/><circle cx="428.1" cy="466.3" r="1.2"/><circle cx="422.7" cy="471.4" r="1.2"/><circle cx="423.5" cy="476.0" r="1.2"/><circle cx="426.1" cy="476.3" r="1.2"/><circle cx="425.0" cy="479.5" r="1.2"/><circle cx="427.3" cy="480.1" r="1.2"/><circle cx="423.5" cy="483.2" r="1.2"/><circle cx="420.1" cy="483.2" r="1.2"/><circle cx="416.1" cy="483.2" r="1.2"/><circle cx="431.9" cy="479.8" r="1.2"/><circle cx="435.3" cy="479.8" r="1.2"/><circle cx="438.0" cy="478.0" r="1.2"/><circle cx="441.4" cy="479.0" r="1.2"/><circle cx="432.7" cy="482.6" r="1.2"/><circle cx="436.5" cy="482.6" r="1.2"/><circle cx="440.3" cy="482.6" r="1.2"/><circle cx="443.4" cy="482.6" r="1.2"/><circle cx="444.9" cy="485.2" r="1.2"/><circle cx="444.9" cy="487.8" r="1.2"/><circle cx="434.2" cy="487.8" r="1.2"/><circle cx="442.1" cy="490.5" r="1.2"/><circle cx="438.0" cy="493.9" r="1.2"/><circle cx="441.8" cy="493.9" r="1.2"/><circle cx="443.4" cy="496.3" r="1.2"/><circle cx="445.2" cy="498.5" r="1.2"/><circle cx="447.7" cy="500.5" r="1.2"/><circle cx="450.6" cy="501.2" r="1.2"/><circle cx="402.0" cy="480.6" r="1.2"/><circle cx="404.6" cy="489.7" r="1.2"/><circle cx="407.4" cy="488.7" r="1.2"/><circle cx="361.5" cy="505.8" r="1.2"/><circle cx="366.8" cy="509.3" r="1.2"/><circle cx="372.2" cy="513.0" r="1.2"/><circle cx="376.8" cy="505.8" r="1.2"/><circle cx="377.9" cy="509.2" r="1.2"/><circle cx="390.1" cy="506.6" r="1.2"/><circle cx="405.4" cy="499.4" r="1.2"/><circle cx="407.4" cy="505.8" r="1.2"/><circle cx="405.4" cy="508.6" r="1.2"/><circle cx="403.6" cy="511.2" r="1.2"/><circle cx="408.2" cy="511.9" r="1.2"/><circle cx="391.3" cy="511.9" r="1.2"/><circle cx="379.8" cy="513.2" r="1.2"/><circle cx="377.9" cy="515.0" r="1.2"/><circle cx="380.6" cy="516.1" r="1.2"/><circle cx="382.9" cy="515.3" r="1.2"/><circle cx="386.0" cy="514.2" r="1.2"/><circle cx="389.5" cy="516.5" r="1.2"/><circle cx="378.8" cy="518.5" r="1.2"/><circle cx="382.9" cy="520.1" r="1.2"/><circle cx="385.2" cy="519.1" r="1.2"/><circle cx="388.0" cy="520.4" r="1.2"/><circle cx="390.6" cy="519.9" r="1.2"/><circle cx="392.1" cy="521.9" r="1.2"/><circle cx="395.2" cy="523.4" r="1.2"/><circle cx="397.1" cy="518.5" r="1.2"/><circle cx="400.5" cy="519.6" r="1.2"/><circle cx="402.8" cy="518.1" r="1.2"/><circle cx="400.5" cy="522.7" r="1.2"/><circle cx="402.8" cy="523.4" r="1.2"/><circle cx="405.1" cy="515.8" r="1.2"/><circle cx="409.7" cy="517.8" r="1.2"/><circle cx="413.5" cy="513.9" r="1.2"/><circle cx="415.8" cy="517.3" r="1.2"/><circle cx="413.5" cy="518.4" r="1.2"/><circle cx="406.3" cy="519.3" r="1.2"/><circle cx="410.0" cy="522.7" r="1.2"/><circle cx="387.5" cy="524.2" r="1.2"/><circle cx="390.6" cy="524.9" r="1.2"/><circle cx="382.1" cy="526.5" r="1.2"/><circle cx="384.9" cy="528.3" r="1.2"/><circle cx="389.5" cy="528.8" r="1.2"/><circle cx="393.2" cy="526.5" r="1.2"/><circle cx="395.6" cy="527.6" r="1.2"/><circle cx="398.7" cy="525.7" r="1.2"/><circle cx="392.1" cy="530.6" r="1.2"/><circle cx="396.7" cy="532.6" r="1.2"/><circle cx="401.3" cy="534.4" r="1.2"/><circle cx="404.8" cy="534.4" r="1.2"/><circle cx="405.4" cy="530.8" r="1.2"/><circle cx="408.2" cy="528.3" r="1.2"/><circle cx="417.0" cy="526.5" r="1.2"/><circle cx="390.1" cy="535.4" r="1.2"/><circle cx="416.1" cy="535.4" r="1.2"/><circle cx="422.7" cy="537.2" r="1.2"/><circle cx="421.9" cy="510.7" r="1.2"/><circle cx="423.8" cy="512.2" r="1.2"/><circle cx="426.1" cy="516.5" r="1.2"/><circle cx="430.8" cy="516.5" r="1.2"/><circle cx="426.1" cy="543.6" r="1.2"/><circle cx="432.7" cy="546.1" r="1.2"/><circle cx="457.9" cy="557.9" r="1.2"/><circle cx="449.6" cy="563.2" r="1.2"/><circle cx="467.3" cy="561.2" r="1.2"/><circle cx="483.3" cy="547.8" r="1.2"/><circle cx="485.0" cy="569.6" r="1.2"/><circle cx="497.2" cy="585.6" r="1.2"/><circle cx="559.8" cy="564.9" r="1.2"/><circle cx="573.5" cy="567.6" r="1.2"/><circle cx="587.6" cy="559.5" r="1.2"/><circle cx="365.0" cy="391.5" r="1.2"/><circle cx="401.2" cy="419.4" r="1.2"/><circle cx="416.3" cy="436.4" r="1.2"/></g>
<path d="M701 193.5 H847 M701 251.5 H847 M701 310.5 H847 M701 368.5 H847 M701 484.5 H847 M701 601.5 H847" stroke="#008080" stroke-width="1" stroke-dasharray="3 2.6" fill="none" shape-rendering="crispEdges"/>
<path d="M701 427.0 H847 M701 543.0 H847" stroke="#008080" stroke-width="1.2" stroke-dasharray="3 2.6" fill="none"/>
<path d="M701 320 H848 M701 502.2 H848" stroke="#d00000" stroke-width="1.3"/>
<path d="M774.5 169 V653" stroke="#008080" stroke-width="1"/>
<text x="851.3" y="195.3" font-size="9" fill="#e8e8e8" text-anchor="start" textLength="18.2" lengthAdjust="spacingAndGlyphs" >2860</text>
<text x="851.3" y="253.6" font-size="9" fill="#e8e8e8" text-anchor="start" textLength="18.2" lengthAdjust="spacingAndGlyphs" >2880</text>
<text x="851.3" y="311.9" font-size="9" fill="#e8e8e8" text-anchor="start" textLength="18.2" lengthAdjust="spacingAndGlyphs" >2900</text>
<text x="851.3" y="370.3" font-size="9" fill="#e8e8e8" text-anchor="start" textLength="18.2" lengthAdjust="spacingAndGlyphs" >2920</text>
<text x="851.3" y="428.6" font-size="9" fill="#e8e8e8" text-anchor="start" textLength="18.2" lengthAdjust="spacingAndGlyphs" >2940</text>
<text x="851.3" y="486.9" font-size="9" fill="#e8e8e8" text-anchor="start" textLength="18.2" lengthAdjust="spacingAndGlyphs" >2960</text>
<text x="851.3" y="545.2" font-size="9" fill="#e8e8e8" text-anchor="start" textLength="18.2" lengthAdjust="spacingAndGlyphs" >2980</text>
<text x="851.3" y="603.5" font-size="9" fill="#e8e8e8" text-anchor="start" textLength="18.2" lengthAdjust="spacingAndGlyphs" >3000</text>
<text x="595.4" y="323.3" font-size="9.6" fill="#f00000" text-anchor="start" textLength="101.7" lengthAdjust="spacingAndGlyphs" >2ND_WALL_CREEK [PHJ]</text>
<text x="569.8" y="505.6" font-size="9.6" fill="#f00000" text-anchor="start" textLength="127.2" lengthAdjust="spacingAndGlyphs" >2ND_WALL_CREEK_BASE [PHJ]</text>
<rect x="693" y="328" width="7" height="100" fill="#7c0000"/>
<path d="M693 332 H700 M693 347.5 H700 M693 365.5 H700 M693 383.5 H700 M693 399.5 H700 M693 417.5 H700" stroke="#a00000" stroke-width="0.8"/>
<path d="M693 329.4 H700 M693 333.9 H700 M693 338.4 H700 M693 342.9 H700 M693 347.4 H700 M693 351.9 H700 M693 356.3 H700 M693 360.8 H700 M693 365.3 H700 M693 369.8 H700 M693 374.3 H700 M693 378.8 H700 M693 383.3 H700 M693 387.8 H700 M693 392.3 H700 M693 396.8 H700 M693 401.2 H700 M693 405.7 H700 M693 410.2 H700 M693 414.7 H700 M693 419.2 H700 M693 423.7 H700" stroke="#ff1010" stroke-width="1.3"/>
<polyline points="742.9,169.7 741.3,172.8 742.9,175.3 744.4,179.4 746.4,183.0 749.5,185.0 754.6,186.5 760.7,187.0 765.8,188.1 770.9,188.4 774.0,189.1 774.5,192.7 771.9,194.2 763.8,195.2 755.6,196.2 747.4,197.2 740.3,198.8 737.8,202.9 738.3,205.9 741.3,209.0 743.4,212.0 745.9,217.1 749.5,219.2 755.6,221.2 761.7,222.2 767.9,223.3 773.0,224.8 774.5,226.3 773.0,227.9 765.8,228.9 757.7,229.9 750.5,230.9 745.9,232.4 744.4,234.5 746.4,237.6 747.4,240.0 746.7,242.8 748.0,247.9 747.7,253.0 748.2,259.4 750.5,264.5 751.2,268.3 750.5,272.1 752.1,276.6 751.2,281.1 748.6,286.2 744.8,288.7 744.8,292.6 746.7,296.4 750.5,300.2 748.0,304.0 747.3,309.2 744.8,312.3 748.0,315.5 747.7,320.0 747.6,320.6 745.7,322.6 740.6,325.7 734.9,328.3 729.1,330.2 725.9,332.8 725.3,336.6 724.7,340.4 726.6,343.0 728.9,345.5 725.6,350.0 727.6,353.2 725.6,357.0 721.5,358.3 717.0,362.1 716.4,363.4 718.9,367.8 717.7,372.3 722.1,376.1 718.7,381.9 720.2,383.8 730.4,388.2 722.8,392.7 717.7,395.3 717.4,401.6 717.4,408.0 716.4,410.6 718.3,414.4 718.9,418.2 722.8,421.4 724.0,423.9 723.4,430.9 726.6,434.8 723.8,440.5 727.9,443.7 732.3,446.2 728.9,450.1 728.5,453.3 722.8,460.3 723.8,463.5 725.9,466.0 725.9,469.8 729.1,472.4 731.0,478.8 733.0,482.0 732.3,485.2 733.0,490.3 736.8,493.4 740.0,496.0 740.6,499.2 743.8,501.7 747.0,504.3 744.4,509.4 746.2,512.6 745.0,515.7 745.0,520.8 748.4,526.3 745.6,528.5 742.8,532.3 742.8,541.9 740.5,547.6 741.1,553.4 742.4,559.1 740.5,563.6 743.1,566.1 739.9,571.2 736.7,576.3 737.3,581.4 738.0,587.8 740.5,591.6 741.8,596.1 745.0,596.7 741.1,603.1 741.0,602.3 740.3,604.6 741.8,606.9 742.6,609.2 743.3,610.3 741.8,612.3 740.3,614.9 741.4,616.5 743.7,619.1 744.1,622.2 744.9,624.5 743.7,627.6 743.3,632.2 741.8,635.2 743.3,636.8 743.7,642.1 744.9,643.6 742.9,646.7 741.0,648.6 741.4,650.5 743.7,652.1" fill="none" stroke="#e80000" stroke-width="1.0" stroke-linejoin="round"/>
<polyline points="802.4,169.7 802.1,172.2 800.1,176.8 795.5,181.4 790.4,184.5 785.3,186.5 784.3,188.6 784.5,191.6 786.3,194.7 791.4,197.2 796.5,199.3 800.6,200.8 802.4,202.3 801.1,208.0 798.1,213.1 794.0,217.7 789.4,220.7 786.5,222.2 786.3,227.3 788.4,229.4 793.5,232.4 797.0,234.0 799.6,237.6 800.1,240.0 799.8,242.8 800.2,255.5 799.8,264.4 798.9,270.8 796.6,274.6 797.2,281.0 800.4,286.1 803.6,292.5 799.8,300.2 800.4,306.5 802.3,311.6 803.0,318.0 804.9,321.2 805.3,322.6 810.4,325.7 816.1,329.6 821.2,333.4 819.3,335.9 817.4,340.4 816.1,345.5 817.4,350.6 818.1,355.1 821.9,358.3 824.4,362.1 824.4,369.7 822.5,373.6 818.7,378.7 818.7,381.2 819.3,388.9 822.5,395.3 820.6,399.1 818.7,404.2 817.4,411.8 813.4,418.8 811.5,426.5 811.5,436.7 810.2,440.5 809.5,450.7 810.2,452.0 807.0,457.1 802.5,466.0 801.2,471.1 800.4,477.5 799.3,485.2 798.1,491.5 796.1,501.7 795.3,506.8 794.2,516.4 794.9,522.8 794.0,529.1 793.3,536.8 794.0,543.2 794.9,550.8 793.6,559.7 793.3,568.7 795.5,572.5 797.4,577.6 799.3,582.7 796.8,589.1 794.9,594.2 794.2,598.0 794.9,601.8 794.9,610.0 793.8,625.6 792.4,639.3 790.4,651.3" fill="none" stroke="#00f000" stroke-width="1.0" stroke-linejoin="round"/>
<rect x="700.5" y="169.5" width="148" height="484" fill="none" stroke="#0a70e0" stroke-width="1" shape-rendering="crispEdges"/>
<path d="M848.5 169 V654" stroke="#007060" stroke-width="1" shape-rendering="crispEdges"/>
<rect x="699.5" y="168.5" width="148" height="484" fill="none" stroke="#0000e0" stroke-width="1" shape-rendering="crispEdges"/>
<text x="737.7" y="162.8" font-size="9" fill="#e00000" text-anchor="middle" textLength="12.6" lengthAdjust="spacingAndGlyphs" >GR</text>
<text x="810.2" y="162.8" font-size="9" fill="#00d000" text-anchor="middle" textLength="13.4" lengthAdjust="spacingAndGlyphs" >ILD</text>
<text x="736.9" y="665.6" font-size="9" fill="#e00000" text-anchor="middle" textLength="26.5" lengthAdjust="spacingAndGlyphs" >(0-200)</text>
<text x="810.4" y="665.6" font-size="9" fill="#00d000" text-anchor="middle" textLength="26.5" lengthAdjust="spacingAndGlyphs" >(1-100)</text>
</svg></body></html>
